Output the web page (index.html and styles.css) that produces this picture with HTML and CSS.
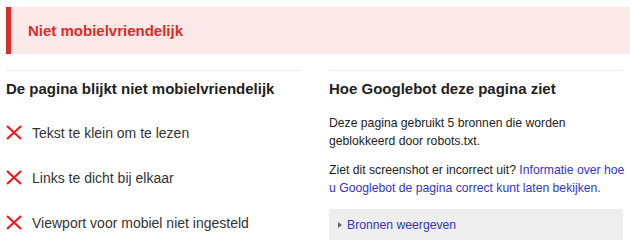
FILE: index.html
```html
<!DOCTYPE html>
<html lang="nl">
<head>
<meta charset="utf-8">
<link rel="stylesheet" href="styles.css">
</head>
<body>
<div class="banner">Niet mobielvriendelijk</div>
<div class="cols">
  <section class="col">
    <h2 class="title">De pagina blijkt niet mobielvriendelijk</h2>
    <ul class="issues">
      <li class="issue"><svg class="x" viewBox="0 0 16 15" width="16" height="15"><path d="M1 1L15 14M15 1L1 14" stroke="#f21a1a" stroke-width="2.2" fill="none"/></svg><span>Tekst te klein om te lezen</span></li>
      <li class="issue"><svg class="x" viewBox="0 0 16 15" width="16" height="15"><path d="M1 1L15 14M15 1L1 14" stroke="#f21a1a" stroke-width="2.2" fill="none"/></svg><span>Links te dicht bij elkaar</span></li>
      <li class="issue"><svg class="x" viewBox="0 0 16 15" width="16" height="15"><path d="M1 1L15 14M15 1L1 14" stroke="#f21a1a" stroke-width="2.2" fill="none"/></svg><span>Viewport voor mobiel niet ingesteld</span></li>
    </ul>
  </section>
  <section class="col">
    <h2 class="title">Hoe Googlebot deze pagina ziet</h2>
    <p class="para">Deze pagina gebruikt 5 bronnen die worden<br>geblokkeerd door robots.txt.</p>
    <p class="para">Ziet dit screenshot er incorrect uit? <a class="link" href="#">Informatie over hoe<br>u Googlebot de pagina correct kunt laten bekijken.</a></p>
    <div class="toggle"><span class="tri"></span><a class="link" href="#">Bronnen weergeven</a></div>
  </section>
</div>
</body>
</html>
```
FILE: styles.css
```css
html, body { margin: 0; padding: 0; background: #fff; }
body { font-family: "Liberation Sans", Arial, sans-serif; color: #222; padding-top: 7px; }
.banner {
  margin-left: 6px;
  height: 47px;
  box-sizing: border-box;
  border-left: 5px solid #dd2b27;
  background: #fce8e8;
  padding-left: 17px;
  display: flex;
  align-items: center;
  color: #dd2b27;
  font-weight: bold;
  font-size: 15px;
}
.cols {
  display: grid;
  grid-template-columns: 294px 294px;
  column-gap: 29px;
  padding-left: 6px;
  margin-top: 16px;
}
.col { border-top: 1px solid #ebebeb; }
.title {
  margin: 9px 0 0;
  font-size: 15px;
  line-height: 18px;
  font-weight: bold;
  color: #222;
}
.issues { list-style: none; margin: 12px 0 0; padding: 0; }
.issue {
  display: flex;
  align-items: center;
  height: 45px;
  font-size: 14px;
  color: #333;
}
.x { flex: none; margin-right: 10px; }
.para {
  margin: 16px 0 0;
  font-size: 12.2px;
  line-height: 18px;
  color: #222;
  white-space: nowrap;
}
.para + .para { margin-top: 11px; }
.link { color: #3434c8; text-decoration: none; }
.toggle {
  margin-top: 12px;
  height: 31px;
  background: #eeeeee;
  display: flex;
  align-items: center;
  padding-left: 9px;
  font-size: 12.2px;
}
.tri {
  width: 0; height: 0;
  border-top: 3px solid transparent;
  border-bottom: 3px solid transparent;
  border-left: 4px solid #666;
  margin-right: 5px;
}
```
